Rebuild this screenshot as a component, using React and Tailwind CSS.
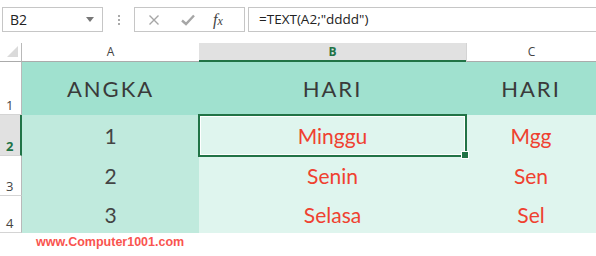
import React from "react";

function RowHead({ n, active, h }) {
  return (
    <div
      className={
        "flex items-end pl-[6px] pb-[2px] border-b border-[#d4d4d4] text-[13px] leading-none " +
        (active
          ? "bg-[#e1e1e1] border-r-2 border-r-[#217346] text-[#217346] font-bold"
          : "bg-white border-r border-r-[#b9b9b9] text-[#444]")
      }
      style={{ height: h }}
    >
      {n}
    </div>
  );
}

function Cell({ children, bg, color, big, h }) {
  return (
    <div
      className={
        "flex items-center justify-center " +
        bg +
        " " +
        color +
        (big ? " text-[22px] tracking-[2px]" : " text-[21px]")
      }
      style={{ height: h, fontFamily: "Lato, 'Open Sans', sans-serif" }}
    >
      {children}
    </div>
  );
}

export default function App() {
  const rows = [
    { n: 2, a: "1", b: "Minggu", c: "Mgg", h: 41 },
    { n: 3, a: "2", b: "Senin", c: "Sen", h: 40 },
    { n: 4, a: "3", b: "Selasa", c: "Sel", h: 37 },
  ];
  return (
    <div
      className="relative w-[596px] h-[256px] bg-white overflow-hidden text-[#333]"
      style={{ fontFamily: "'Open Sans', 'Liberation Sans', sans-serif" }}
    >
      {/* formula bar */}
      <div className="flex items-center pt-[7px]">
        <div className="ml-[2px] w-[101px] h-[25px] border border-[#c6c6c6] flex items-center justify-between pl-[7px] pr-[8px]">
          <span className="text-[14px] text-[#222]">B2</span>
          <span className="w-0 h-0 border-l-[4px] border-r-[4px] border-t-[5px] border-l-transparent border-r-transparent border-t-[#777]" />
        </div>
        <div className="w-[31px] h-[25px] flex flex-col items-center justify-center gap-[2px]">
          <span className="w-[2px] h-[2px] bg-[#aaa]" />
          <span className="w-[2px] h-[2px] bg-[#aaa]" />
          <span className="w-[2px] h-[2px] bg-[#aaa]" />
        </div>
        <div className="w-[111px] h-[25px] border border-[#c6c6c6] flex items-center">
          <svg className="ml-[13px]" width="12" height="12" viewBox="0 0 12 12">
            <path d="M1.5 1.5 L10.5 10.5 M10.5 1.5 L1.5 10.5" stroke="#a6a6a6" strokeWidth="1.4" fill="none" />
          </svg>
          <svg className="ml-[21px]" width="14" height="12" viewBox="0 0 14 12">
            <path d="M1 6.5 L5 10 L13 1.5" stroke="#a6a6a6" strokeWidth="2.4" fill="none" />
          </svg>
          <span
            className="ml-[18px] text-[16px] italic text-[#444] leading-none"
            style={{ fontFamily: "'Liberation Serif', serif" }}
          >
            f<span className="text-[12px]">x</span>
          </span>
        </div>
        <div className="ml-[3px] flex-1 h-[25px] border-y border-l border-[#c6c6c6] flex items-center pl-[10px]">
          <span className="text-[13.5px] text-[#222]">=TEXT(A2;"dddd")</span>
        </div>
      </div>

      {/* sheet */}
      <div className="mt-[11px] grid grid-cols-[22px_177px_267px_130px]">
        <div className="h-[19px] bg-white border-r border-[#b9b9b9] border-b border-b-[#ababab] relative">
          <svg className="absolute left-[6px] top-[2px]" width="13" height="13" viewBox="0 0 13 13">
            <path d="M12 1 L12 12 L1 12 Z" fill="#dadada" />
          </svg>
        </div>
        <div className="h-[19px] bg-white border-b border-[#ababab] flex items-center justify-center text-[12px] text-[#444]">
          A
        </div>
        <div className="h-[19px] bg-[#e1e1e1] border-b-2 border-[#217346] flex items-center justify-center text-[12px] font-bold text-[#217346]">
          B
        </div>
        <div className="h-[19px] bg-white border-b border-[#ababab] border-l border-l-[#d4d4d4] flex items-center justify-center text-[12px] text-[#444]">
          C
        </div>

        <RowHead n={1} h={53} />
        <Cell bg="bg-[#a0e1cf]" color="text-[#3a3a3a]" big h={53}>
          ANGKA
        </Cell>
        <Cell bg="bg-[#a0e1cf]" color="text-[#3a3a3a]" big h={53}>
          HARI
        </Cell>
        <Cell bg="bg-[#a0e1cf]" color="text-[#3a3a3a]" big h={53}>
          HARI
        </Cell>

        {rows.map((r) => (
          <React.Fragment key={r.n}>
            <RowHead n={r.n} active={r.n === 2} h={r.h} />
            <Cell bg="bg-[#c0eadd]" color="text-[#444]" h={r.h}>
              {r.a}
            </Cell>
            <Cell bg="bg-[#dff5ee]" color="text-[#ef4130]" h={r.h}>
              {r.b}
            </Cell>
            <Cell bg="bg-[#dff5ee]" color="text-[#ef4130]" h={r.h}>
              {r.c}
            </Cell>
          </React.Fragment>
        ))}
      </div>

      {/* selection */}
      <div className="absolute left-[198px] top-[114px] w-[269px] h-[43px] border-2 border-[#217346] pointer-events-none">
        <div className="w-full h-full border border-white" />
      </div>
      <div className="absolute left-[461px] top-[151px] w-[8px] h-[8px] bg-[#217346] border border-white" />

      {/* watermark */}
      <div
        className="absolute left-[36px] top-[236px] text-[12.5px] font-bold text-[#f9544f] leading-none"
        style={{ fontFamily: "'Liberation Sans', Arial, sans-serif" }}
      >
        www.Computer1001.com
      </div>
    </div>
  );
}
